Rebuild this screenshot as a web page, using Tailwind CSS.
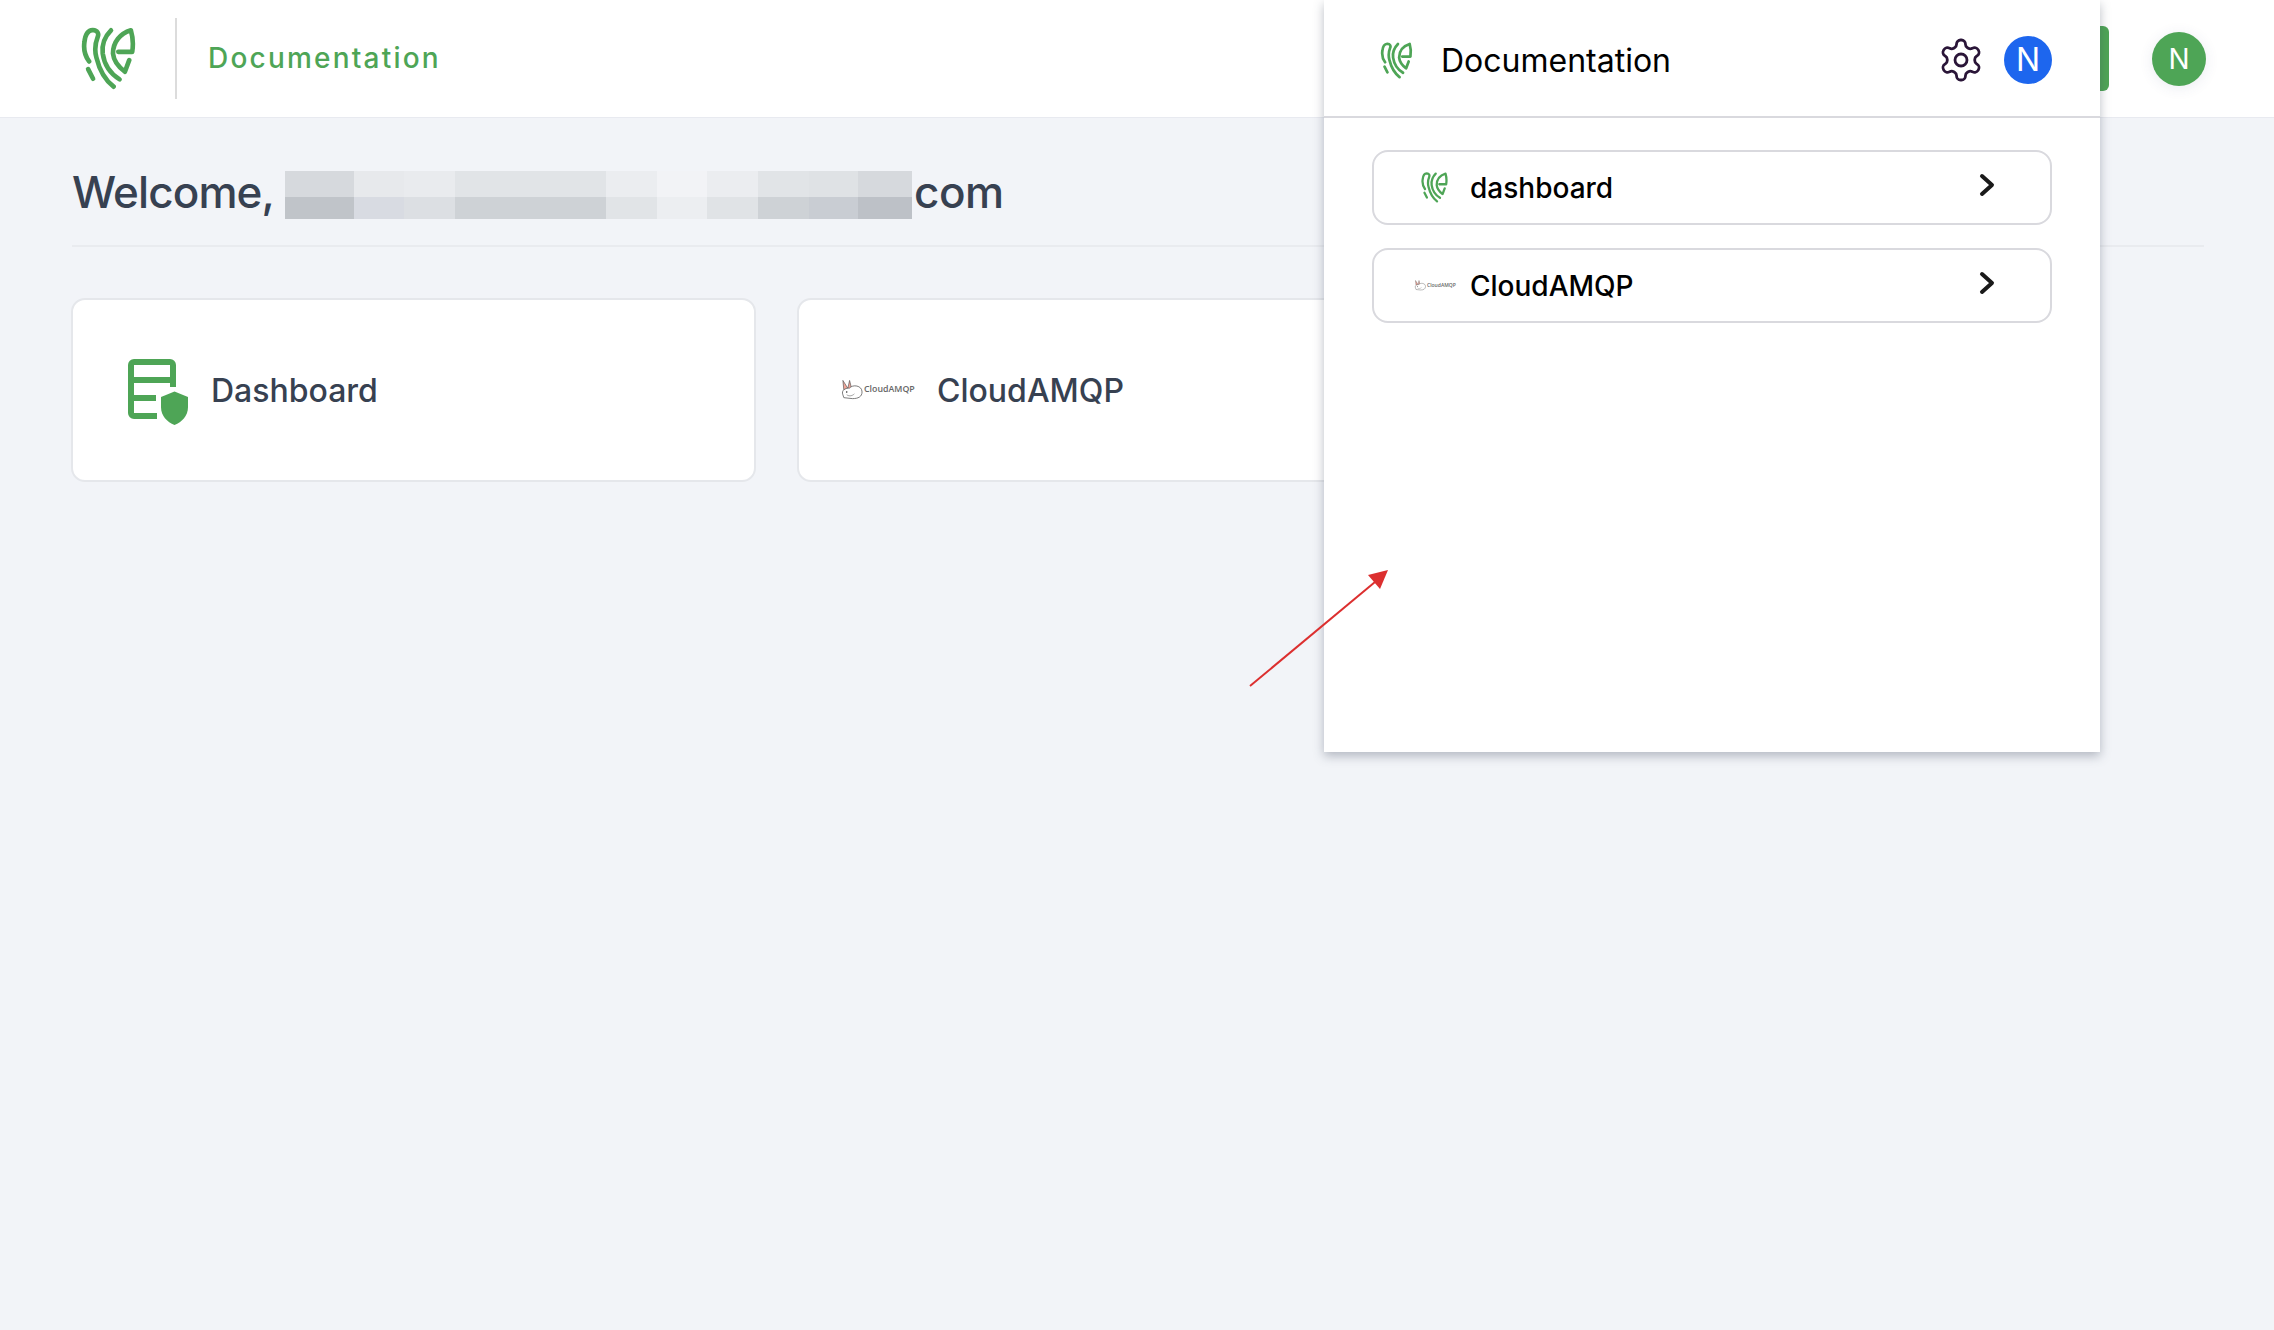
<!doctype html>
<html>
<head>
<meta charset="utf-8">
<script src="https://cdn.jsdelivr.net/npm/@tailwindcss/browser@4"></script>
</head>
<body class="[font-family:Inter,sans-serif] bg-[#f2f4f8]">
<svg class="hidden">
  <symbol id="logo" viewBox="240 80 165 190">
    <g fill="none" stroke="#4ea556" stroke-width="14" stroke-linecap="round" stroke-linejoin="round">
      <path d="M264 184 C250 165 247 145 250 125 C252 105 260 90 275 89 C290 90 294 100 290 110 C282 130 280 150 286 172 C294 205 312 240 338 260"/>
      <path d="M261 207 L276 236"/>
      <path d="M330 90 C310 110 302 135 305 160 C310 195 330 222 356 238"/>
      <path d="M385 180 L372 215 C352 200 338 180 336 160 C336 125 358 100 390 90 C396 110 398 130 394 155 H352"/>
    </g>
  </symbol>
  <symbol id="rabbit" viewBox="0 0 24 20">
    <path d="M3 0 L8 8 L4 10 Z" fill="#f3a79a" stroke="#555" stroke-width=".7"/>
    <path d="M10 0 L12 8 L8 9 Z" fill="#f3a79a" stroke="#555" stroke-width=".7"/>
    <path d="M3 15 C1 10 6 8 10 8 C13 4 23 5 23 12 C23 17 19 19 13 19 L4 18 Z" fill="#fff" stroke="#555" stroke-width=".8"/>
    <path d="M7 15 C10 17 13 16 15 14" fill="none" stroke="#777" stroke-width=".7"/>
    <circle cx="7" cy="12" r=".8" fill="#222"/>
  </symbol>
</svg>

<div class="relative w-[2274px] h-[1330px] overflow-hidden bg-[#f2f4f8]">
  <header class="h-[118px] bg-white border-b border-[#e8eaf0] flex items-center pl-[81px]">
    <svg class="w-[55px] h-[63px] -mt-[1px]"><use href="#logo"/></svg>
    <div class="w-[2px] h-[81px] bg-[#dcdcdc] ml-[39px] mr-[31px]"></div>
    <span class="text-[28px] font-medium tracking-[2.200px] text-[#4ea556] -mt-[1px]">Documentation</span>
  </header>

  <main class="pl-[72px] pr-[70px]">
    <div class="h-[129px] border-b-2 border-[#e9ebef] flex items-start pt-[53px]">
      <h1 class="flex items-center h-[48px] text-[44px] leading-[48px] font-medium text-[#374151]">
        <span class="w-[213px] -mt-[6px] tracking-[-0.02em] whitespace-nowrap">Welcome,</span>
        <span class="flex flex-col w-[627px] h-[48px] overflow-hidden">
          <span class="flex h-[26px] shrink-0">
            <i class="w-[69px] bg-[#d6d9dd]"></i><i class="w-[50px] bg-[#e7e9ec]"></i><i class="w-[51px] bg-[#e9ebee]"></i><i class="w-[51px] bg-[#e1e4e7]"></i><i class="w-[50px] bg-[#e1e4e7]"></i><i class="w-[50px] bg-[#e1e4e7]"></i><i class="w-[51px] bg-[#ebedf0]"></i><i class="w-[50px] bg-[#f2f3f6]"></i><i class="w-[51px] bg-[#ebedf0]"></i><i class="w-[51px] bg-[#e1e4e7]"></i><i class="w-[49px] bg-[#dfe2e5]"></i><i class="w-[54px] bg-[#d6d9dd]"></i>
          </span>
          <span class="flex h-[22px] shrink-0">
            <i class="w-[69px] bg-[#c0c4c9]"></i><i class="w-[50px] bg-[#d8dbe2]"></i><i class="w-[51px] bg-[#dcdfe3]"></i><i class="w-[51px] bg-[#ced2d6]"></i><i class="w-[50px] bg-[#ced2d6]"></i><i class="w-[50px] bg-[#ced2d6]"></i><i class="w-[51px] bg-[#e1e4e7]"></i><i class="w-[50px] bg-[#eceef1]"></i><i class="w-[51px] bg-[#e0e3e6]"></i><i class="w-[51px] bg-[#ced2d6]"></i><i class="w-[49px] bg-[#c9cdd3]"></i><i class="w-[54px] bg-[#bdc1c7]"></i>
          </span>
        </span>
        <span class="ml-[2px] -mt-[7px] tracking-[-0.01em]">com</span>
      </h1>
    </div>

    <div class="flex gap-[41px] mt-[51px] -ml-[1px]">
      <div class="w-[685px] h-[184px] bg-white border-2 border-[#e5e7eb] rounded-[14px] flex items-center pl-[55px]">
        <svg class="w-[60px] h-[66px] mt-[3px]" viewBox="0 0 60 66" fill="none">
          <path d="M45 28V6a3 3 0 0 0-3-3H6a3 3 0 0 0-3 3v48a3 3 0 0 0 3 3h23M3 21h42M3 39h25" stroke="#4ea556" stroke-width="6"/>
          <path d="M46.500 32.500L60 38v10c0 9-6 15-13.500 18C39 63 33 57 33 48V38z" fill="#4ea556"/>
        </svg>
        <span class="ml-[23px] text-[32px] font-medium text-[#374151] mt-[1px]">Dashboard</span>
      </div>
      <div class="w-[685px] h-[184px] bg-white border-2 border-[#e5e7eb] rounded-[14px] flex items-center pl-[41px]">
        <svg class="w-[23px] h-[20px] shrink-0"><use href="#rabbit"/></svg>
        <span class="ml-[1px] w-[51px] text-[8.800px] font-semibold text-[#666] whitespace-nowrap [font-family:'Open_Sans',sans-serif]">CloudAMQP</span>
        <span class="ml-[22px] text-[32px] font-medium text-[#374151] mt-[1px]">CloudAMQP</span>
      </div>
    </div>
  </main>

  <!-- avatar at the far right of the page header -->
  <div class="absolute left-[2100px] top-[26px] w-[9px] h-[65px] bg-[#4ea556] rounded-r-[6px]"></div>
  <div class="absolute left-[2152px] top-[32px] w-[54px] h-[54px] rounded-full bg-[#4ea556] shadow-[0_2px_14px_rgba(60,70,120,0.1)] flex items-center justify-center text-white text-[28px]">N</div>

  <!-- dropdown panel -->
  <aside class="absolute left-[1324px] top-0 w-[776px] h-[752px] bg-white shadow-[0_4px_10px_rgba(60,70,90,0.35)]">
    <div class="h-[118px] border-b-2 border-[#d9d9de] flex items-center pl-[56px] pr-[48px] pt-[4px]">
      <svg class="w-[33px] h-[37px] shrink-0"><use href="#logo"/></svg>
      <span class="ml-[28px] mt-[1px] text-[32px] text-black">Documentation</span>
      <svg class="ml-auto w-[48px] h-[48px]" viewBox="0 0 24 24" fill="none" stroke="#2a1538" stroke-width="1.400" stroke-linecap="round" stroke-linejoin="round">
        <path d="M12.220 2h-.44a2 2 0 0 0-2 2v.18a2 2 0 0 1-1 1.730l-.43.25a2 2 0 0 1-2 0l-.15-.08a2 2 0 0 0-2.730.73l-.22.38a2 2 0 0 0 .73 2.730l.15.1a2 2 0 0 1 1 1.720v.51a2 2 0 0 1-1 1.740l-.15.09a2 2 0 0 0-.73 2.730l.22.38a2 2 0 0 0 2.730.73l.15-.08a2 2 0 0 1 2 0l.43.25a2 2 0 0 1 1 1.730V20a2 2 0 0 0 2 2h.44a2 2 0 0 0 2-2v-.18a2 2 0 0 1 1-1.730l.43-.25a2 2 0 0 1 2 0l.15.08a2 2 0 0 0 2.730-.73l.22-.39a2 2 0 0 0-.73-2.730l-.15-.08a2 2 0 0 1-1-1.740v-.5a2 2 0 0 1 1-1.740l.15-.09a2 2 0 0 0 .73-2.730l-.22-.38a2 2 0 0 0-2.730-.73l-.15.08a2 2 0 0 1-2 0l-.43-.25a2 2 0 0 1-1-1.730V4a2 2 0 0 0-2-2z"/>
        <circle cx="12" cy="12" r="3"/>
      </svg>
      <div class="ml-[19px] w-[48px] h-[48px] rounded-full bg-[#1d66ee] flex items-center justify-center text-white text-[32px]">N</div>
    </div>
    <div class="flex flex-col gap-[23px] pt-[32px] pl-[48px] pr-[48px]">
      <div class="h-[75px] border-2 border-[#d9d9de] rounded-[16px] flex items-center pl-[47px] pr-[55px]">
        <svg class="w-[27px] h-[31px] shrink-0"><use href="#logo"/></svg>
        <span class="ml-[22px] text-[28px] font-medium text-black">dashboard</span>
        <svg class="ml-auto w-[16px] h-[24px] -mt-[5px]" viewBox="0 0 16 24" fill="none" stroke="#1a1a1a" stroke-width="4" stroke-linecap="round" stroke-linejoin="round"><path d="M3 3l10 9-10 9"/></svg>
      </div>
      <div class="h-[75px] border-2 border-[#d9d9de] rounded-[16px] flex items-center pl-[40px] pr-[55px]">
        <svg class="w-[12px] h-[11px] shrink-0"><use href="#rabbit"/></svg>
        <span class="ml-[1px] w-[28px] text-[5px] font-semibold text-[#666] whitespace-nowrap [font-family:'Open_Sans',sans-serif]">CloudAMQP</span>
        <span class="ml-[15px] text-[28px] font-medium text-black">CloudAMQP</span>
        <svg class="ml-auto w-[16px] h-[24px] -mt-[5px]" viewBox="0 0 16 24" fill="none" stroke="#1a1a1a" stroke-width="4" stroke-linecap="round" stroke-linejoin="round"><path d="M3 3l10 9-10 9"/></svg>
      </div>
    </div>
  </aside>

  <!-- annotation arrow -->
  <svg class="absolute left-0 top-0 w-[2274px] h-[1330px] pointer-events-none" viewBox="0 0 2274 1330" fill="none">
    <path d="M1250 686L1375 582" stroke="#dc2f2f" stroke-width="2"/>
    <path d="M1388 570L1368 575L1380 589Z" fill="#dc2f2f"/>
  </svg>
</div>
</body>
</html>
